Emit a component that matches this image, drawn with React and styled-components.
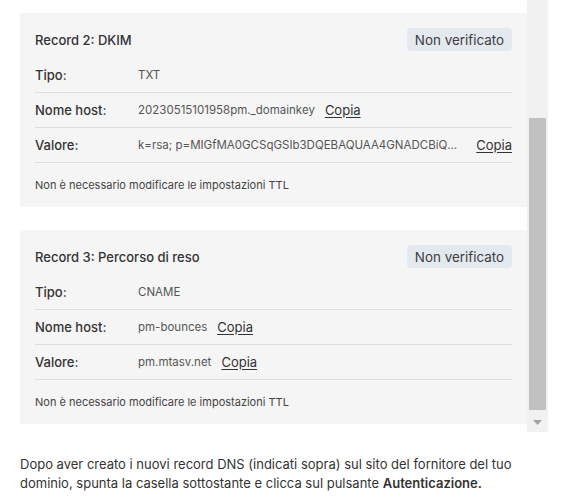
import { useLayoutEffect, useRef } from "react";
import styled, { createGlobalStyle } from "styled-components";

const GlobalStyle = createGlobalStyle`
  body {
    margin: 0;
    background: #fff;
    font-family: Inter, "Noto Sans", sans-serif;
    color: #333;
  }
`;

const Page = styled.div`
  width: 562px;
`;

const ScrollFrame = styled.div`
  display: flex;
  width: 548px;
  height: 432px;
`;

const Viewport = styled.div`
  flex: 1;
  min-width: 0;
  overflow: hidden;
`;

const Scrollbar = styled.div`
  display: flex;
  flex-direction: column;
  width: 21px;
  background: #f1f1f1;
`;

const ScrollButton = styled.div`
  display: flex;
  align-items: center;
  justify-content: center;
  height: 20px;
  flex-shrink: 0;
`;

const Track = styled.div`
  flex: 1;
  padding: 0 2px;
`;

const Thumb = styled.div`
  background: #c1c1c1;
  height: 292px;
  margin-top: 98px;
`;

const List = styled.div`
  display: flex;
  flex-direction: column;
  gap: 23px;
  padding: 14px 0 8px 20px;
`;

const Card = styled.section`
  background: #f5f5f5;
  padding: 15px;
`;

const CardHeader = styled.div`
  display: flex;
  align-items: center;
  justify-content: space-between;
  height: 23px;
  margin-bottom: 7px;
`;

const Title = styled.h3`
  margin: 0;
  font-size: 13px;
  font-weight: 500;
  color: #333;
`;

const Badge = styled.span`
  display: inline-flex;
  align-items: center;
  height: 23px;
  padding: 0 8px;
  border-radius: 4px;
  background: #e4e8ef;
  font-size: 13.4px;
  color: #3d3d3d;
`;

const Row = styled.div`
  display: grid;
  grid-template-columns: 103px minmax(0, 1fr);
  align-items: center;
  height: 34px;
  border-bottom: 1px solid #dddddd;
`;

const Label = styled.span`
  font-size: 13px;
  font-weight: 500;
  color: #333;
`;

const ValueCell = styled.div`
  display: flex;
  align-items: center;
  gap: ${(p) => (p.$spread ? "12px" : "10px")};
  min-width: 0;
`;

const Value = styled.span`
  font-size: 11.5px;
  color: #555;
  white-space: nowrap;
  ${(p) =>
    p.$truncate &&
    `
    flex: 1;
    min-width: 0;
    overflow: hidden;
    text-overflow: ellipsis;
  `}
`;

const Copy = styled.a`
  font-size: 13px;
  color: #333;
  text-decoration: underline;
  text-underline-offset: 2px;
  cursor: pointer;
  flex-shrink: 0;
`;

const Note = styled.p`
  margin: 0;
  padding-top: 15px;
  font-size: 11px;
  line-height: 14px;
  color: #444;
`;

const Info = styled.p`
  margin: 23px 0 0;
  padding: 0 20px;
  font-size: 13px;
  line-height: 19px;
  color: #333;

  & b {
    font-weight: 600;
  }
`;

const records = [
  {
    title: "Record 1: Verifica dominio",
    rows: [{ label: "Tipo:", value: "TXT" }],
  },
  {
    title: "Record 2: DKIM",
    rows: [
      { label: "Tipo:", value: "TXT" },
      { label: "Nome host:", value: "20230515101958pm._domainkey", copy: true },
      {
        label: "Valore:",
        value:
          "k=rsa; p=MIGfMA0GCSqGSIb3DQEBAQUAA4GNADCBiQKBgQCx7fQ2nWv0k3hZ9y8LmR1sT4uVb6cD0eFgH2iJ3kL4mN5oP6qR7sT8uV9wX0yZ",
        copy: true,
        truncate: true,
      },
    ],
  },
  {
    title: "Record 3: Percorso di reso",
    rows: [
      { label: "Tipo:", value: "CNAME" },
      { label: "Nome host:", value: "pm-bounces", copy: true },
      { label: "Valore:", value: "pm.mtasv.net", copy: true },
    ],
  },
];

function RecordCard({ record }) {
  return (
    <Card>
      <CardHeader>
        <Title>{record.title}</Title>
        <Badge>Non verificato</Badge>
      </CardHeader>
      {record.rows.map((row) => (
        <Row key={row.label}>
          <Label>{row.label}</Label>
          <ValueCell $spread={row.truncate}>
            <Value $truncate={row.truncate}>{row.value}</Value>
            {row.copy && <Copy>Copia</Copy>}
          </ValueCell>
        </Row>
      ))}
      <Note>Non è necessario modificare le impostazioni TTL</Note>
    </Card>
  );
}

export default function App() {
  const boxRef = useRef(null);

  // the screenshot shows the list scrolled to its end
  useLayoutEffect(() => {
    const el = boxRef.current;
    if (el) el.scrollTop = el.scrollHeight;
  }, []);

  return (
    <Page>
      <GlobalStyle />
      <ScrollFrame>
        <Viewport ref={boxRef}>
          <List>
            {records.map((r) => (
              <RecordCard key={r.title} record={r} />
            ))}
          </List>
        </Viewport>
        <Scrollbar>
          <ScrollButton />
          <Track>
            <Thumb />
          </Track>
          <ScrollButton>
            <svg width="9" height="5" viewBox="0 0 9 5">
              <polygon points="0,0 9,0 4.5,5" fill="#a3a3a3" />
            </svg>
          </ScrollButton>
        </Scrollbar>
      </ScrollFrame>
      <Info>
        Dopo aver creato i nuovi record DNS (indicati sopra) sul sito del
        fornitore del tuo dominio, spunta la casella sottostante e clicca sul
        pulsante <b>Autenticazione.</b>
      </Info>
    </Page>
  );
}
